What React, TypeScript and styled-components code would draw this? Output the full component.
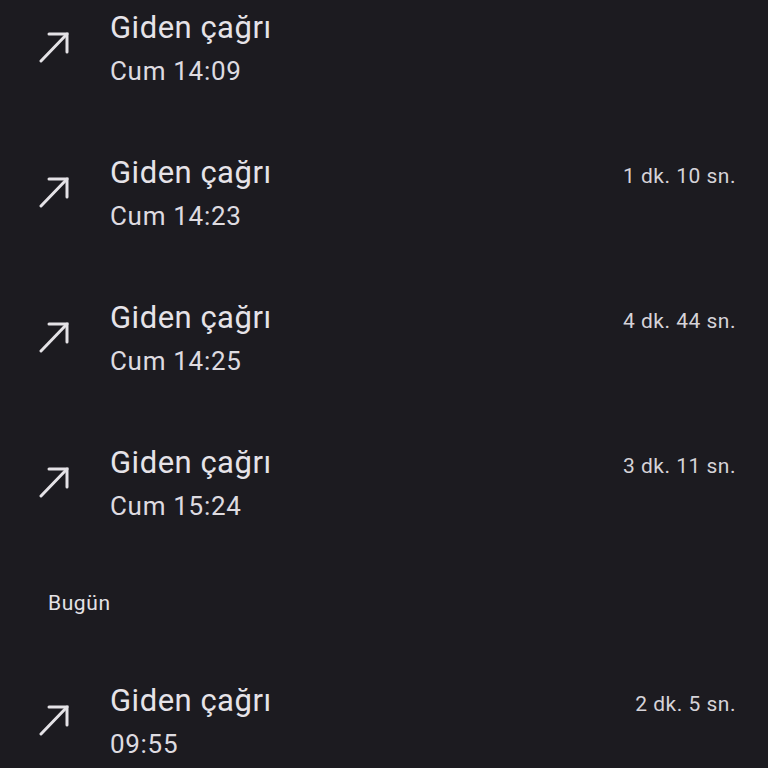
import React from 'react'
import styled, { createGlobalStyle } from 'styled-components'

const GlobalStyle = createGlobalStyle`
  html, body {
    margin: 0;
    padding: 0;
    background: #1c1b20;
  }
  body {
    font-family: Roboto, "Noto Sans", sans-serif;
    color: #e4e2e6;
    overflow: hidden;
  }
`

type Call = { time: string; duration?: string }
type Section = { label?: string; calls: Call[] }

const sections: Section[] = [
  {
    calls: [
      { time: 'Cum 14:09' },
      { time: 'Cum 14:23', duration: '1 dk. 10 sn.' },
      { time: 'Cum 14:25', duration: '4 dk. 44 sn.' },
      { time: 'Cum 15:24', duration: '3 dk. 11 sn.' },
    ],
  },
  {
    label: 'Bugün',
    calls: [{ time: '09:55', duration: '2 dk. 5 sn.' }],
  },
]

function OutgoingIcon() {
  return (
    <svg width="32" height="32" viewBox="0 0 32 32" fill="none">
      <path d="M3 30 L29 3" stroke="#e4e2e6" strokeWidth="3" strokeLinecap="round" />
      <path d="M11 3 H29 V21" stroke="#e4e2e6" strokeWidth="3" strokeLinecap="round" strokeLinejoin="miter" />
    </svg>
  )
}

function App() {
  return (
    <>
      <GlobalStyle />
      <List>
        {sections.map((s, i) => (
          <div key={i}>
            {s.label && <Header>{s.label}</Header>}
            {s.calls.map((c, j) => (
              <Row key={j}>
                <IconBox>
                  <OutgoingIcon />
                </IconBox>
                <Texts>
                  <Title>Giden çağrı</Title>
                  <Sub>{c.time}</Sub>
                </Texts>
                <Duration>{c.duration}</Duration>
              </Row>
            ))}
          </div>
        ))}
      </List>
    </>
  )
}

const List = styled.div`
  margin-top: -24px;
  width: 768px;
`

const Header = styled.div`
  padding: 35px 0 34px 48px;
  font-size: 21px;
  line-height: 24px;
  letter-spacing: 0.6px;
  color: #e4e2e6;
`

const Row = styled.div`
  display: flex;
  align-items: flex-start;
  padding: 34px 32px 34px 38px;
  height: 77px;
`

const IconBox = styled.div`
  width: 32px;
  height: 32px;
  margin-top: 21px;
  margin-right: 40px;
  flex-shrink: 0;
`

const Texts = styled.div`
  display: flex;
  flex-direction: column;
  flex: 1;
`

const Title = styled.div`
  font-size: 31px;
  line-height: 36px;
  letter-spacing: 0.5px;
  color: #e6e3e8;
`

const Sub = styled.div`
  margin-top: 10px;
  font-size: 26px;
  line-height: 31px;
  letter-spacing: 0.7px;
  color: #dedbe0;
`

const Duration = styled.div`
  margin-top: 3px;
  font-size: 21px;
  line-height: 36px;
  letter-spacing: 0.5px;
  color: #d6d3d8;
`

export default App
